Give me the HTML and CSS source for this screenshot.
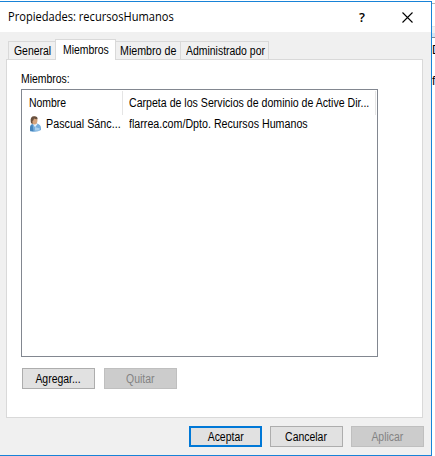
FILE: index.html
```html
<!DOCTYPE html>
<html lang="es">
<head>
<meta charset="utf-8">
<title>Propiedades: recursosHumanos</title>
<link rel="stylesheet" href="styles.css">
</head>
<body>
<div class="desktop">
  <section class="dialog">
    <header class="titlebar">
      <h1 class="title"><span class="t t-title">Propiedades: recursosHumanos</span></h1>
      <span class="help">?</span>
      <svg class="close" width="11" height="11" viewBox="0 0 11 11"><path d="M.5.5l10 10M10.5.5l-10 10" fill="none" stroke="#000" stroke-width="1.1"/></svg>
    </header>
    <nav class="tabs">
      <span class="tab tab-general"><span class="t">General</span></span>
      <span class="tab tab-active"><span class="t">Miembros</span></span>
      <span class="tab tab-memberof"><span class="t t-memberof">Miembro de</span></span>
      <span class="tab tab-managed"><span class="t">Administrado por</span></span>
    </nav>
    <main class="panel">
      <div class="label"><span class="t">Miembros:</span></div>
      <div class="list">
        <div class="row head">
          <div class="name"><span class="t">Nombre</span></div>
          <div class="folder"><span class="t t-folder">Carpeta de los Servicios de dominio de Active Dir...</span></div>
        </div>
        <div class="row">
          <div class="name person">
            <svg class="user" width="13" height="16" viewBox="0 0 13 16">
              <path d="M1 15.2V11.5Q1 8.6 4 7.8L8 7.5Q12 8.6 12 12V14Q8 16.8 1 15.2Z" fill="#76addb"/>
              <path d="M1 14.8V11.5Q1.3 9 3.5 8.3L4.5 15.3Z" fill="#4584bb"/>
              <path d="M4 8l2 3.2L8.5 8z" fill="#e6f1fa"/>
              <path d="M6 11l5 1.5-1 2H6z" fill="#a8cfee"/>
              <ellipse cx="5.4" cy="4.5" rx="3" ry="4" fill="#d6a47c"/>
              <path d="M1.8 6.2Q.8.3 5.2.3 9 .3 8.5 3.3 6 3.4 5 2.6 4.6 5 3.5 5L3.6 8Q2.2 7.7 1.8 6.2Z" fill="#69513f"/>
            </svg>
            <span class="t t-person">Pascual Sánc...</span>
          </div>
          <div class="folder"><span class="t t-path">flarrea.com/Dpto. Recursos Humanos</span></div>
        </div>
      </div>
      <div class="actions">
        <button class="btn"><span class="t">Agregar...</span></button>
        <button class="btn" disabled><span class="t">Quitar</span></button>
      </div>
    </main>
    <footer class="footer">
      <button class="btn primary"><span class="t">Aceptar</span></button>
      <button class="btn"><span class="t">Cancelar</span></button>
      <button class="btn" disabled><span class="t">Aplicar</span></button>
    </footer>
  </section>
  <aside class="behind">
    <div class="strip"></div>
    <div class="peek peek-d">D</div>
    <div class="peek">f</div>
  </aside>
</div>
</body>
</html>
```
FILE: styles.css
```css
* { box-sizing: border-box; }
body {
  margin: 0;
  width: 435px;
  height: 456px;
  overflow: hidden;
  background: #fff;
  color: #000;
  font: 12px/14px "Liberation Sans", Arial, sans-serif;
  white-space: nowrap;
}
.t { display: inline-block; transform: scaleX(.87); transform-origin: left; }
.t-title { transform: scaleX(.925); }
.t-memberof { transform: scaleX(.89); }
.t-folder { transform: scaleX(.883); }
.t-person { transform: scaleX(.895); }
.t-path { transform: scaleX(.89); }
.desktop { display: flex; height: 456px; padding-top: 1px; }
.dialog {
  width: 432px;
  height: 455px;
  flex: none;
  display: flex;
  flex-direction: column;
  background: #f0f0f0;
  border: 1px solid #1883d7;
  border-left: 0;
}
.titlebar { height: 30px; flex: none; display: flex; align-items: center; padding: 0 18px 0 8px; background: #fff; }
.title { margin: 0; flex: 1; font: 12px/14px "Open Sans", sans-serif; }
.help { width: 8px; margin-right: 35px; font: 600 13px/14px "Open Sans", sans-serif; }
.tabs { display: flex; align-items: flex-end; height: 27px; flex: none; padding-left: 8px; }
.tab { height: 18px; border: 1px solid #d9d9d9; border-bottom: 0; padding-top: 2px; text-align: left; }
.tab-general { width: 47px; padding-left: 5px; border-right: 0; }
.tab-active { width: 61px; height: 21px; margin-bottom: -1px; padding: 3px 0 0 7px; background: #fff; z-index: 1; }
.tab-memberof { width: 65px; padding-left: 4px; border-left: 0; }
.tab-managed { width: 88px; padding-left: 5px; border-left: 0; }
.panel { width: 417px; height: 359px; margin-left: 6px; flex: none; background: #fff; border: 1px solid #d9d9d9; padding: 12px 0 0 14px; }
.label { height: 17px; }
.list { width: 357px; height: 268px; border: 1px solid #828790; padding: 1px 1px 0 0; }
.row { display: flex; height: 22px; align-items: center; }
.head { height: 24px; margin-bottom: -2px; }
.name { width: 101px; flex: none; height: 100%; display: flex; align-items: center; padding-left: 7px; }
.folder { width: 253px; flex: none; height: 100%; display: flex; align-items: center; padding-left: 6px; }
.head .name, .head .folder { border-right: 1px solid #e5e5e5; }
.row:not(.head) .folder { padding-left: 6px; }
.user { margin-right: 4px; flex: none; }
.actions { display: flex; gap: 9px; padding: 11px 0 0 1px; }
.btn { width: 73px; height: 21px; padding: 0; border: 1px solid #adadad; background: #e1e1e1; color: #000; font: inherit; text-align: center; }
.btn .t { transform-origin: center; }
.btn:disabled { background: #ccc; border-color: #bfbfbf; color: #838383; }
.primary { border: 2px solid #0078d7; }
.footer { display: flex; gap: 8px; padding: 8px 0 0 189px; }
.behind { width: 3px; overflow: hidden; padding-top: 2px; }
.strip { height: 35px; border-top: 1px solid #b4b4b4; border-bottom: 1px solid #828790; background: linear-gradient(#fff 0 22px, #e5e5e5 22px 23px, #f0f0f0 23px 29px, #d5e3f2 29px); }
.peek { height: 14px; margin-top: 17px; }
.peek-d { margin-top: 5px; }
```
